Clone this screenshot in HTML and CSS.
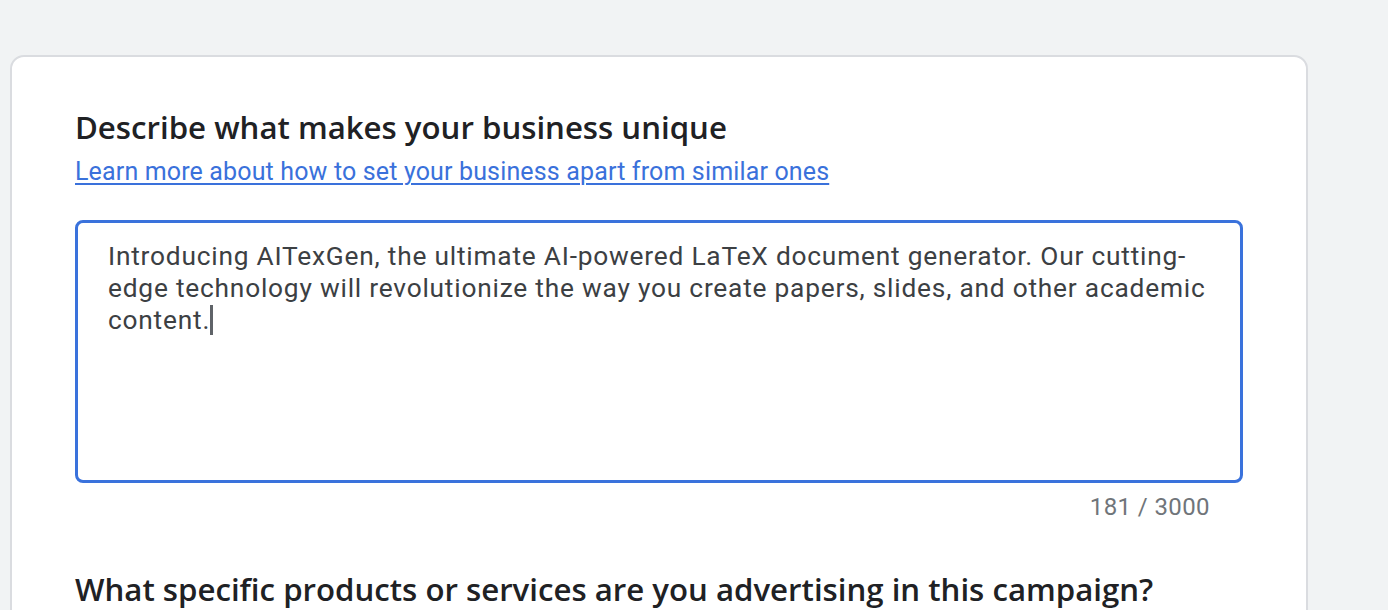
FILE: index.html
```html
<!DOCTYPE html>
<html lang="en">
<head>
<meta charset="utf-8">
<title>Describe your business</title>
<link rel="stylesheet" href="styles.css">
</head>
<body>
<div class="page">
  <section class="card">
    <div class="field">
      <h2 class="title">Describe what makes your business unique</h2>
      <a class="learn" href="#">Learn more about how to set your business apart from similar ones</a>
      <div class="box">
        <p class="box-text">Introducing AITexGen, the ultimate AI-powered LaTeX document generator. Our cutting-edge technology will revolutionize the way you create papers, slides, and other academic content.<span class="caret"></span></p>
      </div>
      <div class="counter">181 / 3000</div>
    </div>
    <div class="field field-next">
      <h2 class="title">What specific products or services are you advertising in this campaign?</h2>
    </div>
  </section>
</div>
</body>
</html>
```
FILE: styles.css
```css
html, body {
  margin: 0;
  padding: 0;
  background: #f1f3f4;
}
.page {
  padding: 55px 0 0 10px;
  width: 1298px;
  height: 555px;
  overflow: hidden;
}
.card {
  background: #ffffff;
  border: 2px solid #dadce0;
  border-radius: 14px;
  padding: 50px 63px 40px 63px;
  height: 620px;
  box-sizing: border-box;
}
.field {
  display: flex;
  flex-direction: column;
  align-items: flex-start;
  width: 1168px;
}
.title {
  margin: 0;
  font-family: "Open Sans", sans-serif;
  font-weight: 600;
  font-size: 31.2px;
  line-height: 40px;
  color: #202124;
  white-space: nowrap;
}
.learn {
  margin-top: 10px;
  font-family: Roboto, sans-serif;
  font-size: 25px;
  letter-spacing: 0.15px;
  line-height: 30px;
  color: #3a71db;
  text-decoration: underline;
  text-decoration-thickness: 2px;
  text-underline-offset: 3px;
}
.box {
  margin-top: 33px;
  width: 100%;
  height: 263px;
  box-sizing: border-box;
  border: 3px solid #3a72dc;
  border-radius: 8px;
  padding: 17px 24px 17px 30px;
}
.box-text {
  margin: 0;
  font-family: Roboto, sans-serif;
  font-size: 26.3px;
  letter-spacing: 0.78px;
  line-height: 32px;
  color: #3c4043;
}
.caret {
  display: inline-block;
  width: 3px;
  height: 30px;
  background: #5f6368;
  vertical-align: -6px;
}
.counter {
  align-self: flex-end;
  margin-top: 10px;
  padding-right: 33px;
  font-family: Roboto, sans-serif;
  font-size: 24px;
  letter-spacing: 0.4px;
  line-height: 28px;
  color: #70757a;
}
.field-next {
  margin-top: 48px;
}
```
